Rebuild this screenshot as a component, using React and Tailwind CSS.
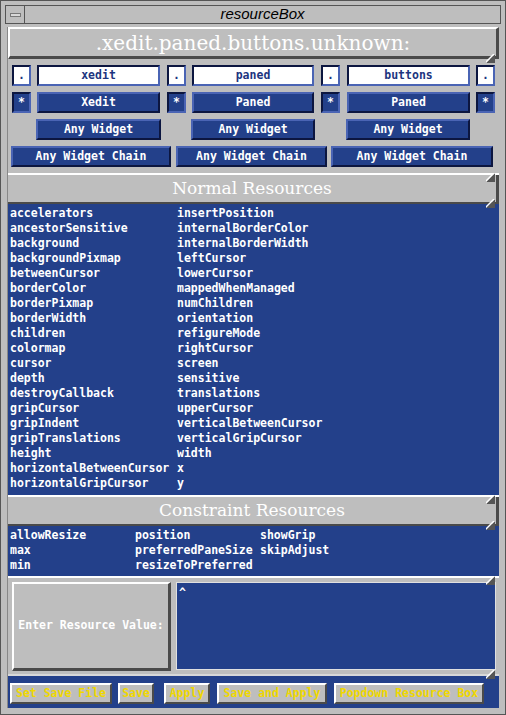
import React from 'react'

const mono = "font-['DejaVu_Sans_Mono',monospace] font-bold text-[11.5px]"
const serif = "font-['DejaVu_Serif',serif]"

const normalLeft = ['accelerators', 'ancestorSensitive', 'background', 'backgroundPixmap', 'betweenCursor', 'borderColor', 'borderPixmap', 'borderWidth', 'children', 'colormap', 'cursor', 'depth', 'destroyCallback', 'gripCursor', 'gripIndent', 'gripTranslations', 'height', 'horizontalBetweenCursor', 'horizontalGripCursor']
const normalRight = ['insertPosition', 'internalBorderColor', 'internalBorderWidth', 'leftCursor', 'lowerCursor', 'mappedWhenManaged', 'numChildren', 'orientation', 'refigureMode', 'rightCursor', 'screen', 'sensitive', 'translations', 'upperCursor', 'verticalBetweenCursor', 'verticalGripCursor', 'width', 'x', 'y']

function Grip({ className }) {
    return (
        <svg className={'absolute ' + className} width="9" height="9" viewBox="0 0 9 9">
            <polygon points="9,0 9,9 0,9" fill="#555" />
            <polygon points="9,0 0,9 0,7 7,0" fill="#fff" />
        </svg>
    )
}

function Dot({ ch }) {
    return (
        <div className={`w-[19px] h-[21px] shrink-0 bg-white border-2 border-t-[#0c1640] border-l-[#0c1640] border-b-[#4a64b4] border-r-[#4a64b4] flex items-center justify-center text-[#1d3580] ${mono}`}>
            {ch}
        </div>
    )
}

function Star() {
    return (
        <div className={`w-[19px] h-[21px] shrink-0 bg-[#23408a] border-2 border-t-[#0c1640] border-l-[#0c1640] border-b-[#4a64b4] border-r-[#4a64b4] flex items-center justify-center text-white ${mono}`}>
            *
        </div>
    )
}

function Input({ w, text }) {
    return (
        <div style={{ width: w }} className={`h-[21px] shrink-0 bg-white border-2 border-t-[#0c1640] border-l-[#0c1640] border-b-[#4a64b4] border-r-[#4a64b4] flex items-center justify-center text-[#1d3580] ${mono}`}>
            {text}
        </div>
    )
}

function BlueBtn({ w, text }) {
    return (
        <div style={{ width: w }} className={`h-[21px] shrink-0 bg-[#23408a] border-2 border-t-[#4a64b4] border-l-[#4a64b4] border-b-[#0c1640] border-r-[#0c1640] flex items-center justify-center text-white ${mono}`}>
            {text}
        </div>
    )
}

function PaneHeader({ text }) {
    return (
        <div className="relative border-t-2 border-white">
            <div className={`h-[29px] bg-[#bebebe] border-r-[3px] border-b-2 border-[#4a4a4a] flex items-center justify-center text-white text-[17px] ${serif}`}>
                {text}
            </div>
            <Grip className="right-[4px] -top-[2px]" />
            <Grip className="right-[4px] bottom-[-4px]" />
        </div>
    )
}

function YellowBtn({ text, w, ml }) {
    return (
        <div style={{ width: w, marginLeft: ml }} className={`h-[21px] shrink-0 bg-[#bebebe] border-2 border-t-white border-l-white border-b-[#4a4a4a] border-r-[#4a4a4a] flex items-center justify-center text-[#f0d800] ${mono}`}>
            {text}
        </div>
    )
}

export default function App() {
    return (
        <div className="w-[506px] h-[715px] bg-[#bebebe] border border-[#555] flex flex-col overflow-hidden">
            <div className="mx-[4px] mt-[4px] h-[19px] shrink-0 flex border border-[#555] bg-[#bebebe]">
                <div className="w-[19px] border-r border-[#555] flex items-center justify-center">
                    <div className="w-[11px] h-[4px] bg-[#d8d8d8] border border-[#777]"></div>
                </div>
                <div className="flex-1 flex items-center justify-center italic text-[15px] text-black font-['Liberation_Sans',sans-serif]">
                    resourceBox
                </div>
            </div>

            <div className="ml-[6px] mr-[6px] mt-[3px] flex flex-col border-l border-[#888]">
                {/* name header */}
                <div className="relative">
                    <div className={`h-[32px] bg-[#bebebe] border-t-2 border-l-2 border-white border-r-[3px] border-b-[3px] border-r-[#4a4a4a] border-b-[#4a4a4a] flex items-center justify-center text-white text-[20px] ${serif}`}>
                        .xedit.paned.buttons.unknown:
                    </div>
                    <Grip className="right-[4px] bottom-[-4px]" />
                </div>

                {/* widget rows */}
                <div className="pt-[6px] pb-[6px] flex flex-col gap-[6px] pl-[4px]">
                    <div className="flex">
                        <Dot ch="." />
                        <div className="w-[6px]" />
                        <Input w={123} text="xedit" />
                        <div className="w-[7px]" />
                        <Dot ch="." />
                        <div className="w-[6px]" />
                        <Input w={122} text="paned" />
                        <div className="w-[7px]" />
                        <Dot ch="." />
                        <div className="w-[7px]" />
                        <Input w={123} text="buttons" />
                        <div className="w-[6px]" />
                        <Dot ch="." />
                    </div>
                    <div className="flex">
                        <Star />
                        <div className="w-[6px]" />
                        <BlueBtn w={123} text="Xedit" />
                        <div className="w-[7px]" />
                        <Star />
                        <div className="w-[6px]" />
                        <BlueBtn w={122} text="Paned" />
                        <div className="w-[7px]" />
                        <Star />
                        <div className="w-[7px]" />
                        <BlueBtn w={123} text="Paned" />
                        <div className="w-[6px]" />
                        <Star />
                    </div>
                    <div className="flex pl-[24px]">
                        <BlueBtn w={125} text="Any Widget" />
                        <div className="w-[30px]" />
                        <BlueBtn w={124} text="Any Widget" />
                        <div className="w-[31px]" />
                        <BlueBtn w={124} text="Any Widget" />
                    </div>
                    <div className="flex -ml-[1px]">
                        <BlueBtn w={160} text="Any Widget Chain" />
                        <div className="w-[5px]" />
                        <BlueBtn w={151} text="Any Widget Chain" />
                        <div className="w-[4px]" />
                        <BlueBtn w={162} text="Any Widget Chain" />
                    </div>
                </div>

                <PaneHeader text="Normal Resources" />
                <div className={`bg-[#23408a] text-white pt-[2px] pb-[4px] pl-[2px] flex leading-[15px] ${mono}`}>
                    <div className="w-[167px] flex flex-col">
                        {normalLeft.map(n => <div key={n}>{n}</div>)}
                    </div>
                    <div className="flex flex-col">
                        {normalRight.map(n => <div key={n}>{n}</div>)}
                    </div>
                </div>

                <PaneHeader text="Constraint Resources" />
                <div className={`bg-[#23408a] text-white pt-[2px] pb-[3px] pl-[2px] grid grid-cols-[125px_125px_1fr] leading-[15px] ${mono}`}>
                    <div>allowResize</div><div>position</div><div>showGrip</div>
                    <div>max</div><div>preferredPaneSize</div><div>skipAdjust</div>
                    <div>min</div><div>resizeToPreferred</div><div></div>
                </div>

                {/* value entry */}
                <div className="relative border-t-2 border-white">
                    <div className="flex gap-[5px] pl-[4px] pr-[3px] pt-[4px] pb-[3px] bg-[#bebebe]">
                        <div className={`w-[159px] h-[89px] shrink-0 bg-[#bebebe] border-2 border-t-white border-l-white border-b-[3px] border-r-[3px] border-b-[#4a4a4a] border-r-[#4a4a4a] flex items-center justify-center text-white ${mono}`}>
                            Enter Resource Value:
                        </div>
                        <div className={`flex-1 h-[88px] bg-[#23408a] border border-[#e0e0e0] text-white pl-[2px] pt-[2px] ${mono}`}>
                            ^
                        </div>
                    </div>
                    <Grip className="right-[4px] -top-[2px]" />
                    <Grip className="right-[4px] bottom-[-5px]" />
                </div>

                {/* buttons */}
                <div className="border-t-2 border-[#d8d8d8]">
                    <div className="bg-[#23408a] flex items-center pl-[2px] pt-[7px] pb-[4px]">
                        <YellowBtn w={102} ml={0} text="Set Save File" />
                        <YellowBtn w={36} ml={6} text="Save" />
                        <YellowBtn w={46} ml={10} text="Apply" />
                        <YellowBtn w={110} ml={7} text="Save and Apply" />
                        <YellowBtn w={150} ml={7} text="Popdown Resource Box" />
                    </div>
                </div>
            </div>
        </div>
    )
}
